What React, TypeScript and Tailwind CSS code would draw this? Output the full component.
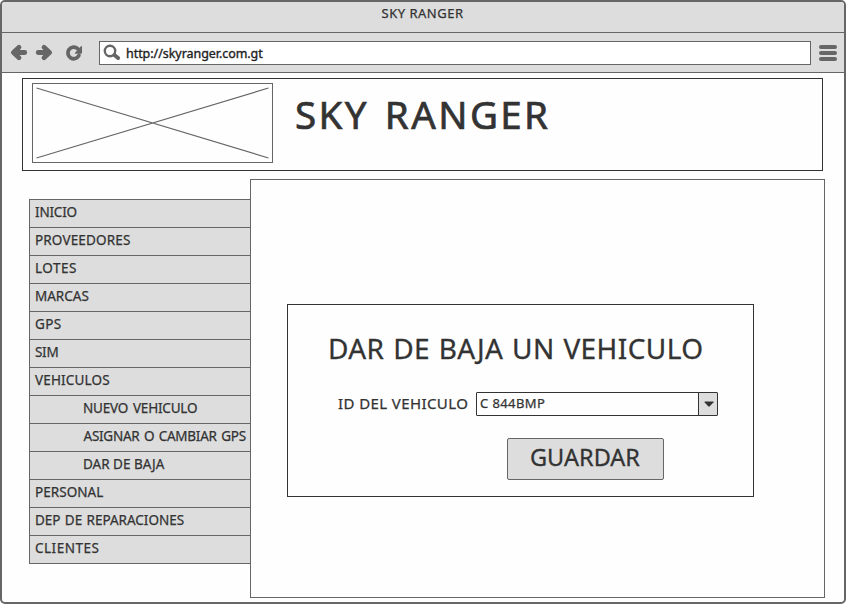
const menu = [
  { label: "INICIO", style: "pl-[5px] -tracking-[0.2px]" },
  { label: "PROVEEDORES", style: "pl-[5px] tracking-[0.15px]" },
  { label: "LOTES", style: "pl-[5px] tracking-[0.5px]" },
  { label: "MARCAS", style: "pl-[5px] tracking-[0px]" },
  { label: "GPS", style: "pl-[5px] tracking-[0.4px]" },
  { label: "SIM", style: "pl-[5px] -tracking-[0.3px]" },
  { label: "VEHICULOS", style: "pl-[5px] tracking-[0.15px]" },
  { label: "NUEVO VEHICULO", style: "pl-[53px] -tracking-[0.2px] [word-spacing:1.5px]" },
  { label: "ASIGNAR O CAMBIAR GPS", style: "pl-[53.5px] -tracking-[0.25px] [word-spacing:1.2px]" },
  { label: "DAR DE BAJA", style: "pl-[53px] tracking-[0px]" },
  { label: "PERSONAL", style: "pl-[5px] tracking-[0.05px]" },
  { label: "DEP DE REPARACIONES", style: "pl-[5px] tracking-[0px] [word-spacing:0.8px]" },
  { label: "CLIENTES", style: "pl-[5px] tracking-[0.5px]" },
];

function Toolbar() {
  return (
    <div className="flex h-[40px] shrink-0 border-b border-[#666] bg-[#ddd] pt-[8px] text-[#666]">
      <svg className="-mt-[8px] h-[39px] w-[97px] shrink-0" viewBox="2 33 97 39" fill="none" stroke="currentColor">
        <path d="M24.8 52.5H14M19 47.3l-5.6 5.2L19 57.7" strokeWidth="4.8" strokeLinecap="round" strokeLinejoin="round" />
        <path d="M38.2 52.5H49M44 47.3l5.6 5.2L44 57.7" strokeWidth="4.8" strokeLinecap="round" strokeLinejoin="round" />
        <path d="M77.6 48.6a5.8 5.8 0 1 0 1.3 6.9" strokeWidth="3.8" strokeLinecap="round" />
        <path d="M81.2 46q.8-.4.8.6v6.2q0 .9-.9.9h-5.6q-1.3-.1-.5-1z" fill="currentColor" stroke="none" />
      </svg>
      <div className="flex h-[24px] w-[712px] shrink-0 border border-[#666] bg-white">
        <svg className="h-[22px] w-[26px] shrink-0" viewBox="100 42 26 22" fill="none" stroke="currentColor">
          <circle cx="110" cy="51" r="5.2" strokeWidth="2.4" />
          <path d="M114.4 55l3.7 3" strokeWidth="4" strokeLinecap="round" />
        </svg>
        <span className="text-[12.5px] leading-[23px] text-[#222] -tracking-[0.05px] [-webkit-text-stroke:0.35px_#222]">
          http://skyranger.com.gt
        </span>
      </div>
      <div className="ml-[7.5px] mt-[4px] flex w-[18px] flex-col gap-[2px]">
        <div className="h-[4px] rounded-[2px] bg-[#666]" />
        <div className="h-[4px] rounded-[2px] bg-[#666]" />
        <div className="h-[4px] rounded-[2px] bg-[#666]" />
      </div>
    </div>
  );
}

export default function App() {
  return (
    <div className="h-[604px] w-[846px] overflow-hidden bg-white font-['Noto_Sans',sans-serif] text-[#333] [-webkit-text-stroke:0.25px_#333]">
      <div className="flex h-[604px] w-[846px] flex-col overflow-hidden rounded-[5px] border-2 border-[#666] bg-[#fefefe]">
        <div className="h-[31px] shrink-0 border-b border-[#666] bg-[#ddd] pr-[1px] text-center text-[13px] leading-[23px] tracking-[0.5px]">
          SKY RANGER
        </div>
        <Toolbar />
        <header className="ml-[20px] mt-[5px] flex h-[93px] w-[801px] shrink-0 border border-[#333] pl-[9px] pt-[4px]">
          <div className="h-[80px] w-[241px] shrink-0 border border-[#666]">
            <svg className="h-[78px] w-[239px]" viewBox="33 84 239 78" stroke="#666">
              <path d="M36.5 88L268.5 158M36.5 158L268.5 88" strokeWidth="1.2" />
            </svg>
          </div>
          <h1 className="ml-[22px] text-[38.5px] leading-[63px] tracking-[2.4px] [word-spacing:3.5px] [-webkit-text-stroke:0.7px_#333]">
            SKY RANGER
          </h1>
        </header>
        <div className="ml-[27px] mt-[8px] flex shrink-0">
          <nav className="mt-[20px] h-[365px] w-[221px] border-l border-t border-[#666] bg-[#ddd]">
            {menu.map((item) => (
              <div
                key={item.label}
                className={`h-[28px] whitespace-nowrap border-b border-[#666] text-[13.5px] leading-[25px] ${item.style}`}
              >
                {item.label}
              </div>
            ))}
          </nav>
          <main className="h-[419px] w-[575px] border border-[#666] pl-[36px] pt-[124px]">
            <section className="h-[193px] w-[467px] border border-[#333]">
              <h2 className="ml-[40px] mt-[23px] whitespace-nowrap text-[28px] leading-[40px] tracking-[0.42px] [word-spacing:1px] [-webkit-text-stroke:0.3px_#333]">
                DAR DE BAJA UN VEHICULO
              </h2>
              <div className="ml-[50px] mt-[24px] flex h-[24px]">
                <label className="w-[138px] whitespace-nowrap text-[15px] leading-[22px] tracking-[0.4px]">
                  ID DEL VEHICULO
                </label>
                <div className="flex w-[242px] rounded-[1px] border border-[#333]">
                  <span className="w-[221px] pl-[3px] text-[13px] leading-[21px] tracking-[0.4px]">C 844BMP</span>
                  <span className="flex flex-1 items-center justify-center border-l border-[#333] bg-[#ddd] pl-[1px]">
                    <svg className="h-[6px] w-[10px]" viewBox="0 0 10 6" fill="#333">
                      <path d="M.5 1Q.5.5 1 .5h8q1 0 .5.8L5.8 5.3q-.8.7-1.6 0L.7 1.4z" />
                    </svg>
                  </span>
                </div>
              </div>
              <button className="ml-[219px] mt-[22px] block h-[42px] w-[157px] rounded-[2px] border border-[#666] bg-[#ddd] pb-[5px] pr-[1px] text-[23.5px] leading-[34px] [-webkit-text-stroke:0.3px_#333]">
                GUARDAR
              </button>
            </section>
          </main>
        </div>
      </div>
    </div>
  );
}
